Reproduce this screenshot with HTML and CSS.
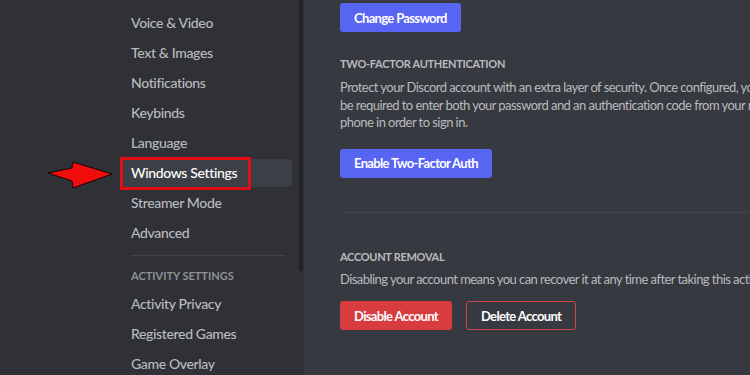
FILE: index.html
```html
<!DOCTYPE html>
<html lang="en">
<head>
  <meta charset="UTF-8" />
  <title>User Settings</title>
  <link rel="stylesheet" href="styles.css">
</head>
<body>
  <aside class="sidebar">
    <nav class="side-nav">
      <div class="side-item">Accessibility</div>
      <div class="side-item">Voice &amp; Video</div>
      <div class="side-item">Text &amp; Images</div>
      <div class="side-item">Notifications</div>
      <div class="side-item">Keybinds</div>
      <div class="side-item">Language</div>
      <div class="side-item selected">
        Windows Settings
        <svg class="callout-arrow" width="67" height="30" viewBox="0 0 67 30">
          <polygon points="1,13 25,8 26,2 65,14 26,28 25,21" fill="#f20d0d" stroke="#1a0000" stroke-width="1" stroke-linejoin="miter"/>
        </svg>
        <span class="callout-frame"></span>
      </div>
      <div class="side-item">Streamer Mode</div>
      <div class="side-item">Advanced</div>
      <div class="side-sep"></div>
      <div class="side-header">Activity Settings</div>
      <div class="side-item">Activity Privacy</div>
      <div class="side-item">Registered Games</div>
      <div class="side-item">Game Overlay</div>
    </nav>
    <div class="scroll-thumb"></div>
  </aside>

  <main class="content">
    <button class="btn btn-brand btn-first">Change Password</button>

    <h5 class="section-title">Two-Factor Authentication</h5>
    <p class="section-text">
      Protect your Discord account with an extra layer of security. Once configured, you'll<br>
      be required to enter both your password and an authentication code from your mobile<br>
      phone in order to sign in.
    </p>
    <button class="btn btn-brand btn-2fa">Enable Two-Factor Auth</button>

    <div class="divider"></div>

    <h5 class="section-title removal">Account Removal</h5>
    <p class="section-text short">
      Disabling your account means you can recover it at any time after taking this action.
    </p>
    <div class="btn-row">
      <button class="btn btn-danger">Disable Account</button>
      <button class="btn btn-outline">Delete Account</button>
    </div>
  </main>
</body>
</html>
```

FILE: styles.css
```css
* { margin: 0; padding: 0; box-sizing: border-box; }
html, body {
  width: 100%; height: 100%;
  font-family: Lato, "Liberation Sans", sans-serif;
  overflow: hidden;
}
body {
  display: flex;
  background: #36393f;
}

/* sidebar */
.sidebar {
  width: 304px;
  flex-shrink: 0;
  background: #2f3136;
  display: flex;
  justify-content: flex-end;
}
.side-nav {
  width: 171px;
  margin-top: -21px;
}
.side-item {
  position: relative;
  height: 28px;
  line-height: 28px;
  padding: 0 10px;
  margin-bottom: 2px;
  border-radius: 4px;
  font-size: 14px;
  font-weight: 500;
  letter-spacing: -0.35px;
  color: #b9bbbe;
  white-space: nowrap;
}
.side-item.selected {
  background: #3c3f45;
  color: #ffffff;
}
.callout-frame {
  position: absolute;
  left: -1px; top: -2px;
  width: 131px; height: 33px;
  border: 3px solid #e10f14;
}
.callout-arrow {
  position: absolute;
  left: -74px; top: 1px;
}
.side-sep {
  height: 1px;
  background: #3f4248;
  margin: 8px 7px 0 10px;
}
.side-header {
  padding: 12px 10px 6px;
  line-height: 16px;
  font-size: 11px;
  font-weight: 700;
  text-transform: uppercase;
  color: #8e9297;
}
.scroll-thumb {
  width: 4px;
  height: 271px;
  margin: 0 1px 0 7px;
  background: #202225;
  border-radius: 0 0 2px 2px;
}

/* content */
.content {
  flex: 1;
  padding-left: 36px;
  overflow: hidden;
}
.btn {
  height: 29px;
  padding: 0 14px;
  border: none;
  border-radius: 3px;
  font-family: inherit;
  font-size: 13px;
  font-weight: 700;
  letter-spacing: -0.65px;
  color: #fff;
  cursor: pointer;
}
.btn-brand { background: #5865f2; }
.btn-first { display: block; margin-top: 3px; }
.btn-2fa { display: block; margin-top: 17px; }
.btn-danger { background: #d83c3e; }
.btn-outline {
  background: transparent;
  border: 1px solid #c9464a;
}
.section-title {
  margin-top: 24px;
  line-height: 16px;
  font-size: 11px;
  font-weight: 700;
  letter-spacing: -0.3px;
  text-transform: uppercase;
  color: #b9bbbe;
}
.section-title.removal { margin-top: 36px; }
.section-text {
  margin-top: 7px;
  font-size: 13px;
  line-height: 17.5px;
  letter-spacing: -0.55px;
  color: #b9bbbe;
  white-space: nowrap;
}
.section-text.short { margin-top: 6px; }
.divider {
  height: 1px;
  margin-top: 34px;
  background: #42454a;
}
.btn-row {
  display: flex;
  gap: 14px;
  margin-top: 13px;
}
```
